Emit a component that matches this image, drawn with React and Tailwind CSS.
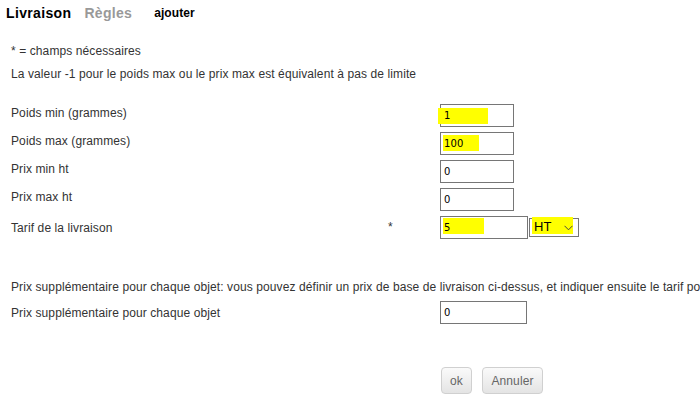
const Field = ({ value, width = "w-[74px]", mark }) => {
  return (
    <div
      className={`relative h-[23px] ${width} border border-[#767676] bg-white flex items-center pl-[3px] text-[10px] text-black`}
      style={{ fontFamily: '"DejaVu Sans", Verdana, sans-serif' }}
    >
      {mark && <div className={`absolute bg-[#ffff00] ${mark}`} />}
      <span className="relative">{value}</span>
    </div>
  );
};

const rows = [
  { label: "Poids min (grammes)", value: "1", mark: "-left-[3px] top-[3px] w-[50px] h-[16px]" },
  { label: "Poids max (grammes)", value: "100", mark: "left-[2px] top-[2px] w-[36px] h-[16px]" },
  { label: "Prix min ht", value: "0" },
  { label: "Prix max ht", value: "0" },
];

const App = () => {
  return (
    <div
      className="w-[700px] h-[404px] overflow-hidden bg-white text-[12px] text-[#333] tracking-[0.1px]"
      style={{ fontFamily: '"Liberation Sans", Arial, sans-serif' }}
    >
      <div className="h-[26px] flex items-center pl-[6px] font-bold">
        <span className="text-[14px] text-black tracking-[0.35px]">Livraison</span>
        <span className="text-[14px] text-[#999] ml-[13px] tracking-[0.3px]">Règles</span>
        <span className="text-[12px] text-black ml-[22px]">ajouter</span>
      </div>

      <div className="pl-[11px] mt-[14px]">
        <div className="h-[23px] leading-[23px]">* = champs nécessaires</div>
        <div className="h-[23px] leading-[23px]">
          La valeur -1 pour le poids max ou le prix max est équivalent à pas de limite
        </div>
      </div>

      <div className="pl-[11px] mt-[15px]">
        {rows.map((r) => (
          <div key={r.label} className="h-[28px] flex items-center">
            <div className="w-[376px] pb-[5px]">{r.label}</div>
            <div className="w-[53px]" />
            <Field value={r.value} mark={r.mark} />
          </div>
        ))}
        <div className="h-[28px] flex items-center">
          <div className="w-[376px] pt-[2px]">Tarif de la livraison</div>
          <div className="w-[53px] pl-[1px]">*</div>
          <Field value="5" width="w-[88px]" mark="left-[2px] top-[1px] w-[41px] h-[16px]" />
          <div className="relative ml-[1px] h-[19px] w-[50px] border border-[#767676] bg-white flex items-center pl-[4px] text-[13px] text-black">
            <div className="absolute left-[2px] -top-[2px] w-[41px] h-[17px] bg-[#ffff00]" />
            <span className="relative">HT</span>
            <svg className="absolute right-[5px] top-[6px]" width="9" height="6" viewBox="0 0 9 6">
              <polyline points="0.5,0.8 4.5,4.8 8.5,0.8" fill="none" stroke="#444" strokeWidth="1" />
            </svg>
          </div>
        </div>
      </div>

      <div className="pl-[11px] mt-[35px]">
        <div className="h-[22px] leading-[23px] whitespace-nowrap">
          Prix supplémentaire pour chaque objet: vous pouvez définir un prix de base de livraison ci-dessus, et indiquer ensuite le tarif pour chaque objet supplémentaire.
        </div>
        <div className="h-[28px] flex items-center">
          <div className="w-[429px] pt-[1px]">Prix supplémentaire pour chaque objet</div>
          <Field value="0" width="w-[87px]" />
        </div>
      </div>

      <div className="pl-[441px] mt-[41px] flex gap-[10px]">
        <button className="w-[31px] h-[27px] rounded-[4px] border border-[#d0d0d0] bg-gradient-to-b from-[#fafafa] to-[#e4e4e4] text-[12px] text-[#666]">
          ok
        </button>
        <button className="w-[61px] h-[27px] rounded-[4px] border border-[#d0d0d0] bg-gradient-to-b from-[#fafafa] to-[#e4e4e4] text-[12px] text-[#666]">
          Annuler
        </button>
      </div>
    </div>
  );
};

export default App;
